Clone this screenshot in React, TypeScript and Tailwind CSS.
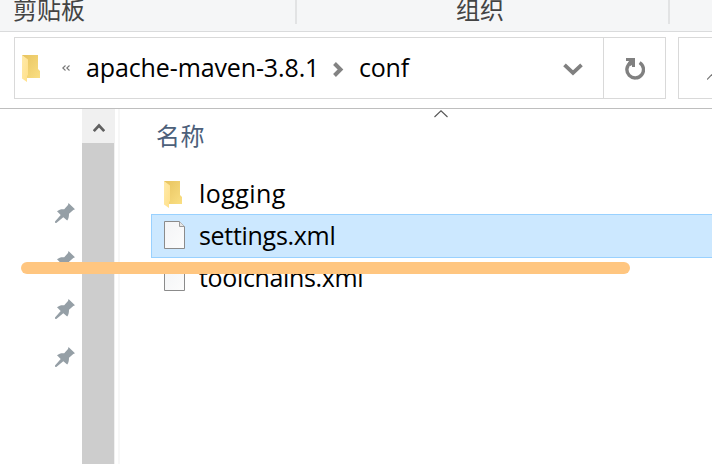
import type { ReactNode } from "react";

const latin = "font-['Open_Sans','Noto_Sans',sans-serif]";
const cjk = "font-['Noto_Sans_CJK_SC',sans-serif]";

function Folder() {
  return (
    <svg width="20" height="28" viewBox="0 0 20 28" className="block shrink-0">
      <defs>
        <linearGradient id="folderBack" x1="0" y1="0" x2="1" y2="1">
          <stop offset="0" stopColor="#e7c35f" />
          <stop offset="1" stopColor="#fadf83" />
        </linearGradient>
        <linearGradient id="folderFront" x1="0" y1="0" x2="1" y2="1">
          <stop offset="0" stopColor="#ffeaa9" />
          <stop offset="1" stopColor="#ffe08a" />
        </linearGradient>
      </defs>
      <path d="M0 0H16V14L18 16V23H0Z" fill="url(#folderBack)" />
      <path d="M0 0L6 4.5V20L5 21V27L0 23.5Z" fill="url(#folderFront)" />
    </svg>
  );
}

function Doc() {
  return (
    <svg width="21" height="28" viewBox="0 0 21 28" className="block shrink-0">
      <defs>
        <linearGradient id="paper" x1="0" y1="0" x2="1" y2="1">
          <stop offset="0" stopColor="#f3f4f6" />
          <stop offset="1" stopColor="#fcfcfc" />
        </linearGradient>
      </defs>
      <path d="M.5 .5H15.5L20.5 5.5V27.5H.5Z" fill="url(#paper)" stroke="#8b8b8b" />
      <path d="M15.5 .5V5.5H20.5" fill="#e5e5e5" stroke="#9a9a9a" />
    </svg>
  );
}

function Pin() {
  return (
    <svg width="20" height="20" viewBox="0 0 20 20" className="block">
      <path
        d="M13.5 0L20 6.3L18.3 7L14 10.7C14 13.5 13.6 15.7 12.2 17.6L8.3 14.2L1.3 20L0 19.8V18.5L5.7 12L2 8.3C4.2 6.5 6.4 6 9.2 6.3L13 2Z"
        fill="#959fa6"
      />
    </svg>
  );
}

function FileRow({ icon, selected, children }: { icon: ReactNode; selected?: boolean; children: ReactNode }) {
  return (
    <div
      className={
        selected
          ? "flex h-11 items-center border border-r-0 border-[#99d1ff] bg-[#cce8ff] pl-3"
          : "flex h-[42px] items-center pl-[13px]"
      }
    >
      <div className="w-[35px]">{icon}</div>
      {children}
    </div>
  );
}

export default function App() {
  return (
    <div className={`relative flex h-[464px] w-[712px] flex-col overflow-hidden bg-white text-[25px] text-black ${latin}`}>
      <div className={`flex h-8 shrink-0 border-b border-[#dadbdc] bg-[#f5f6f7] text-[24px] text-[#444] ${cjk}`}>
        <div className="flex h-6 w-[297px] border-r-2 border-[#e2e3e4] pl-[13px]">
          <span className="-mt-[9px] leading-9">剪贴板</span>
        </div>
        <div className="flex h-6 w-[373px] border-r-2 border-[#e2e3e4] pl-[159px]">
          <span className="-mt-[9px] leading-9">组织</span>
        </div>
      </div>
      <div className="flex h-[77px] shrink-0 border-b border-[#bebebe] pl-3.5 pt-[5px]">
        <div className="flex h-[62px] w-[652px] border border-[#d9d9d9]">
          <div className="flex flex-1 items-center pl-[7px]">
            <div className="mt-0.5">
              <Folder />
            </div>
            <svg width="8" height="7" viewBox="0 0 8 7" className="ml-5 block" fill="none" stroke="#777" strokeWidth="1.1">
              <path d="M3.5 .5L.8 3L3.5 5.5M7.5 .5L4.8 3L7.5 5.5" />
            </svg>
            <span className="ml-4 w-[247px] whitespace-nowrap tracking-[-0.12px]">apache-maven-3.8.1</span>
            <svg width="11" height="15" viewBox="0 0 11 15" className="mt-0.5 block" fill="none" stroke="#838383" strokeWidth="4">
              <path d="M1.5 1.5L7.5 7.5L1.5 13.5" />
            </svg>
            <span className="ml-[15px] tracking-[-0.2px]">conf</span>
            <svg width="20" height="13" viewBox="0 0 20 13" className="ml-auto mr-5 mt-0.5 block" fill="none" stroke="#808080" strokeWidth="3.8">
              <path d="M1.5 1.8L10 9.8L18.5 1.8" />
            </svg>
          </div>
          <div className="flex w-[62px] items-center justify-center border-l border-[#d9d9d9]">
            <svg width="20" height="22" viewBox="0 0 20 22" className="ml-px mt-px block">
              <path d="M5.2 5A8.3 8.3 0 1 0 14.6 4.6" fill="none" stroke="#808080" strokeWidth="3.4" />
              <path d="M1 0H10V9H7V7L5.5 8L2.5 5.5L4 3H1Z" fill="#808080" />
            </svg>
          </div>
        </div>
        <div className="ml-3 flex h-[62px] flex-1 items-center justify-end border border-r-0 border-[#d9d9d9]">
          <svg width="5" height="6" viewBox="0 0 5 6" className="mt-[17px] block" stroke="#777" strokeWidth="1.2">
            <path d="M0 5.5L5 .5" />
          </svg>
        </div>
      </div>
      <div className="flex min-h-0 flex-1">
        <div className="flex w-[82px] flex-col items-end gap-7 pr-[7px] pt-[94px]">
          <Pin />
          <Pin />
          <Pin />
          <Pin />
        </div>
        <div className="flex w-[33px] flex-col bg-[#f0f0f0]">
          <div className="flex h-[34px] items-center justify-center">
            <svg width="12" height="10" viewBox="0 0 12 10" className="mt-[3px] block" fill="none" stroke="#606060" strokeWidth="2.7">
              <path d="M.8 8.2L6 2.5L11.2 8.2" />
            </svg>
          </div>
          <div className="w-8 flex-1 bg-[#cdcdcd]" />
        </div>
        <div className="ml-[3px] w-0.5 bg-[#f7f7f7]" />
        <div className="flex-1 pl-[31px]">
          <div className="flex h-[63px] pl-[5px] pt-2">
            <span className={`text-[24px] leading-9 tracking-[0.5px] text-[#4c607a] ${cjk}`}>名称</span>
            <svg width="14" height="8" viewBox="0 0 14 8" className="-mt-[7px] ml-[229px] block" fill="none" stroke="#555" strokeWidth="1.1">
              <path d="M.5 7L7 .8L13.5 7" />
            </svg>
          </div>
          <FileRow icon={<div className="mt-[3px]"><Folder /></div>}>
            <span className="mt-0.5 tracking-[0.45px]">logging</span>
          </FileRow>
          <FileRow icon={<div className="-mt-0.5"><Doc /></div>} selected>
            <span className="tracking-[-0.3px]">settings.xml</span>
          </FileRow>
          <div className="-mt-0.5">
            <FileRow icon={<Doc />}>
              <span className="mt-0.5 tracking-[-0.35px]">toolchains.xml</span>
            </FileRow>
          </div>
        </div>
      </div>
      <div className="absolute left-[21px] top-[262px] h-3 w-[609px] rounded-full bg-[#ffc680]" />
    </div>
  );
}
